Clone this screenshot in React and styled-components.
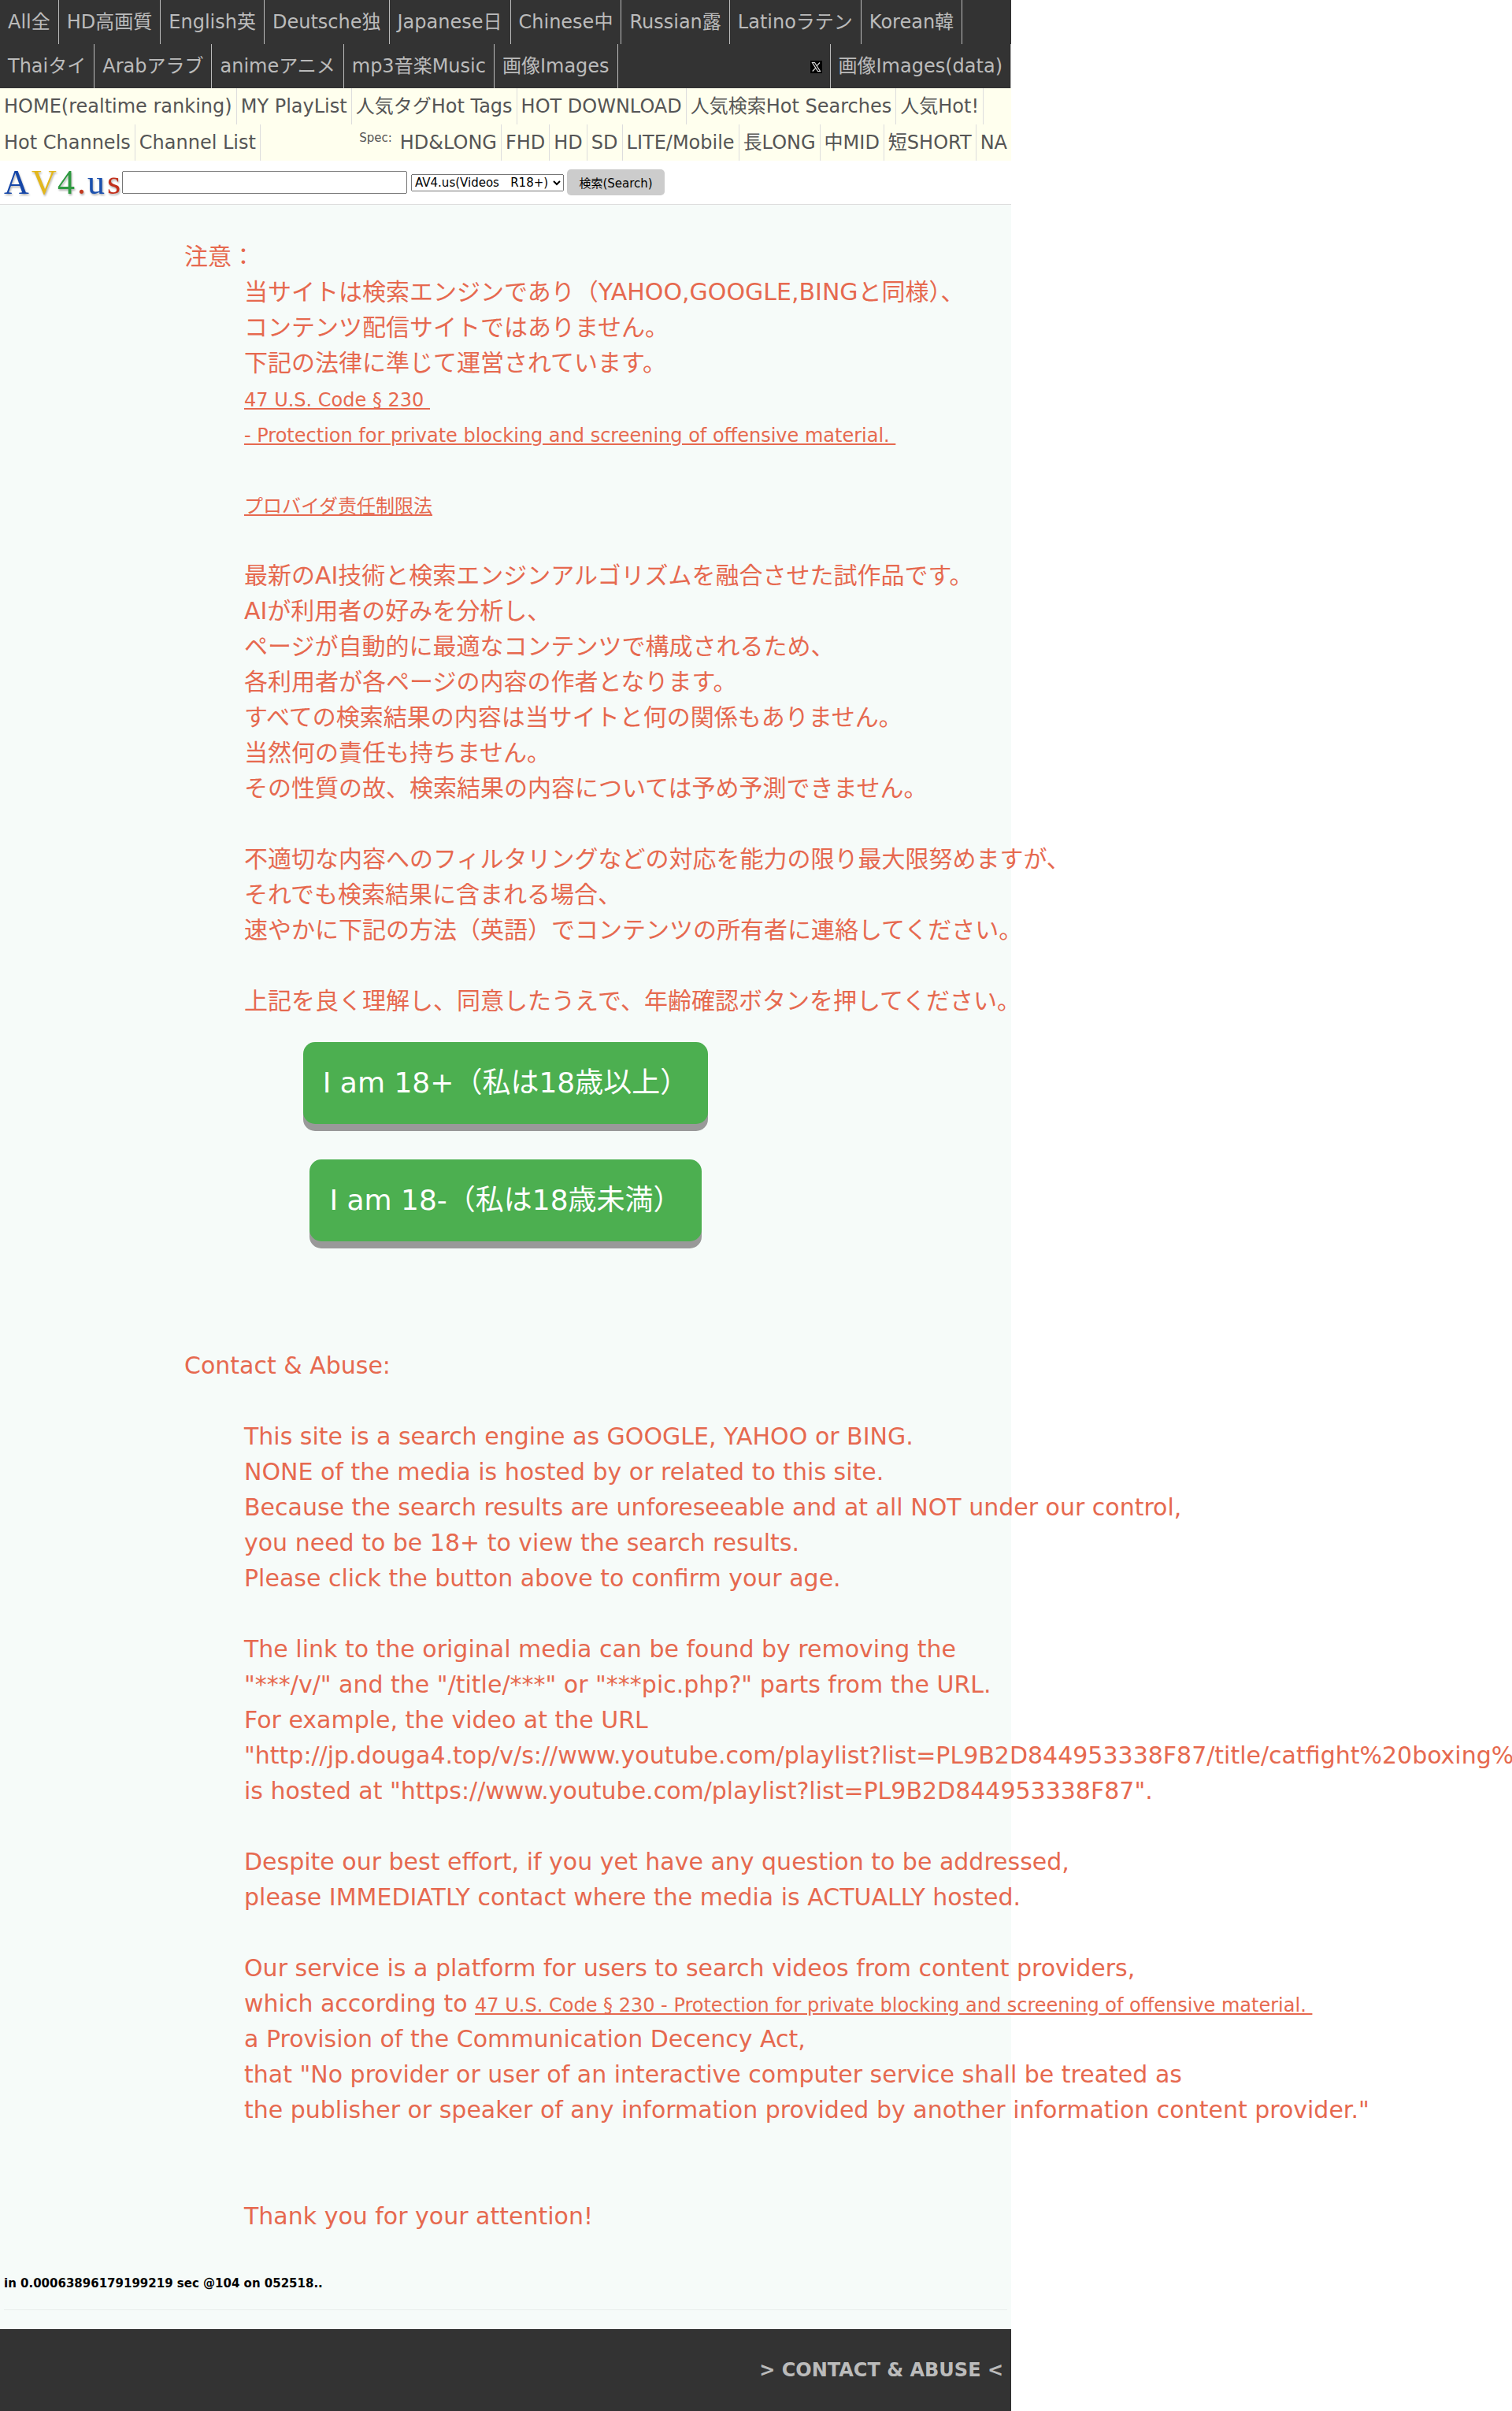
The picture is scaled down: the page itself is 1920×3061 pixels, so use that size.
import React, { useState } from 'react';
import styled, { createGlobalStyle } from 'styled-components';

const languages = [
  "All全", "HD高画質", "English英", "Deutsche独", "Japanese日",
  "Chinese中", "Russian露", "Latinoラテン", "Korean韓"
];
const categories = ["Thaiタイ", "Arabアラブ", "animeアニメ", "mp3音楽Music", "画像Images"];
const rankings = [
  "HOME(realtime ranking)", "MY PlayList", "人気タグHot Tags",
  "HOT DOWNLOAD", "人気検索Hot Searches", "人気Hot!"
];
const channels = ["Hot Channels", "Channel List"];
const specs = ["HD&LONG", "FHD", "HD", "SD", "LITE/Mobile", "長LONG", "中MID", "短SHORT", "NA"];

const logoLetters = [
  { char: "A", x: 5, color: "#1546a8" },
  { char: "V", x: 40, color: "#e3b71c" },
  { char: "4", x: 73, color: "#2f9a41" },
  { char: ".", x: 98, color: "#c23a20" },
  { char: "u", x: 111, color: "#1b50ae" },
  { char: "s", x: 136, color: "#c2301c" }
];

export default function App() {

  const [keyword, setKeyword] = useState("");

  return (
    <Page>
      <GlobalStyle />
      <NavRow>
        {languages.map((name) => <NavItem key={name}>{name}</NavItem>)}
      </NavRow>
      <NavRow>
        {categories.map((name) => <NavItem key={name}>{name}</NavItem>)}
        <NavRight>
          <NavItem>
            <XMark viewBox="0 0 15 16">
              <path d="M2.5 2.5h3l7 11h-3z M12 2.5l-4.2 4.6 M7 9.2l-4.3 4.3" />
            </XMark>
          </NavItem>
          <NavItem>画像Images(data)</NavItem>
        </NavRight>
      </NavRow>
      <SubRow>
        {rankings.map((name) => <SubItem key={name}>{name}</SubItem>)}
      </SubRow>
      <SubRow>
        {channels.map((name) => <SubItem key={name}>{name}</SubItem>)}
        <NavRight>
          <SpecLabel>Spec:</SpecLabel>
          {specs.map((name) => <SubItem key={name} $last={name === "NA"}>{name}</SubItem>)}
        </NavRight>
      </SubRow>

      <SearchBar>
        <Logo width="155" height="52" viewBox="0 0 155 52">
          {logoLetters.map(({ char, x, color }) => (
            <text key={char} x={x} y="40" fill={color}>{char}</text>
          ))}
        </Logo>
        <SearchInput type="text" name="keyword" value={keyword} onChange={(e) => setKeyword(e.target.value)} />
        <SearchSelect>
          <option>AV4.us(Videos&nbsp;&nbsp; R18+)</option>
        </SearchSelect>
        <SearchButton type="submit">検索(Search)</SearchButton>
      </SearchBar>

      <Content>
        <Notice>
          <dt>注意：</dt>
          <dd>
            当サイトは検索エンジンであり（YAHOO,GOOGLE,BINGと同様）、<br />
            コンテンツ配信サイトではありません。<br />
            下記の法律に準じて運営されています。<br />
            <LawLink>47 U.S. Code § 230&nbsp;</LawLink><br />
            <LawLink>- Protection for private blocking and screening of offensive material.&nbsp;</LawLink><br />
            <br />
            <LawLink>プロバイダ责任制限法</LawLink><br />
            <br />
            最新のAI技術と検索エンジンアルゴリズムを融合させた試作品です。<br />
            AIが利用者の好みを分析し、<br />
            ページが自動的に最適なコンテンツで構成されるため、<br />
            各利用者が各ページの内容の作者となります。<br />
            すべての検索結果の内容は当サイトと何の関係もありません。<br />
            当然何の責任も持ちません。<br />
            その性質の故、検索結果の内容については予め予測できません。<br />
            <br />
            不適切な内容へのフィルタリングなどの対応を能力の限り最大限努めますが、<br />
            それでも検索結果に含まれる場合、<br />
            速やかに下記の方法（英語）でコンテンツの所有者に連絡してください。<br />
            <br />
            上記を良く理解し、同意したうえで、年齢確認ボタンを押してください。
          </dd>
        </Notice>

        <AgeButtons>
          <AgeButton>I am 18+（私は18歳以上）</AgeButton>
          <AgeButton>I am 18-（私は18歳未満）</AgeButton>
        </AgeButtons>

        <Notice>
          <dt>Contact &amp; Abuse:</dt>
          <dd>
            <br />
            This site is a search engine as GOOGLE, YAHOO or BING.<br />
            NONE of the media is hosted by or related to this site.<br />
            Because the search results are unforeseeable and at all NOT under our control,<br />
            you need to be 18+ to view the search results.<br />
            Please click the button above to confirm your age.<br />
            <br />
            The link to the original media can be found by removing the<br />
            "***/v/" and the "/title/***" or "***pic.php?" parts from the URL.<br />
            For example, the video at the URL<br />
            "http://jp.douga4.top/v/s://www.youtube.com/playlist?list=PL9B2D844953338F87/title/catfight%20boxing%<br />
            is hosted at "https://www.youtube.com/playlist?list=PL9B2D844953338F87".<br />
            <br />
            Despite our best effort, if you yet have any question to be addressed,<br />
            please IMMEDIATLY contact where the media is ACTUALLY hosted.<br />
            <br />
            Our service is a platform for users to search videos from content providers,<br />
            which according to <LawLink>47 U.S. Code § 230 - Protection for private blocking and screening of offensive material.&nbsp;</LawLink><br />
            a Provision of the Communication Decency Act,<br />
            that "No provider or user of an interactive computer service shall be treated as<br />
            the publisher or speaker of any information provided by another information content provider."<br />
            <br />
            <br />
            Thank you for your attention!
          </dd>
        </Notice>

        <Timing>in 0.00063896179199219 sec @104 on 052518..</Timing>
        <Divider />
      </Content>

      <Footer>&gt; CONTACT &amp; ABUSE &lt;</Footer>
    </Page>
  );
};

const GlobalStyle = createGlobalStyle`
  * {
    box-sizing: border-box;
  }
  body {
    margin: 0;
    background: #fff;
    overflow-x: hidden;
    font-family: "DejaVu Sans", "Noto Sans CJK JP", sans-serif;
    font-size: 24px;
    line-height: 1.5;
  }
`;

const Page = styled.div`
  width: 1284px;
`;

const NavRow = styled.div`
  display: flex;
  height: 56px;
  background: #333;
  color: #bbb;
`;

const NavItem = styled.div`
  padding: 10px;
  border-right: 1px solid #bbb;
  white-space: nowrap;
`;

const NavRight = styled.div`
  display: flex;
  margin-left: auto;
`;

const XMark = styled.svg`
  display: block;
  width: 15px;
  height: 16px;
  margin-top: 11px;
  background: #000;
  fill: none;
  stroke: #ddd;
  stroke-width: 1.2;
`;

const SubRow = styled.div`
  display: flex;
  height: 46px;
  background: #ffffee;
  color: #555;
`;

const SubItem = styled.div`
  padding: 5px;
  border-right: ${(props) => props.$last ? "none" : "1px solid #ddd"};
  white-space: nowrap;
`;

const SpecLabel = styled.div`
  padding: 0 5px;
  font-size: 15px;
  line-height: 34px;
`;

const SearchBar = styled.div`
  display: flex;
  align-items: center;
  height: 56px;
  border-bottom: 1px solid #ddd;
`;

const Logo = styled.svg`
  font-family: "Liberation Serif", serif;
  font-size: 44px;
  filter: drop-shadow(1px 2px 1px rgba(0, 0, 0, 0.3));
`;

const SearchInput = styled.input`
  width: 362px;
  height: 29px;
  margin-right: 5px;
`;

const SearchSelect = styled.select`
  width: 194px;
  height: 22px;
  margin-right: 4px;
  padding: 0;
  font-family: inherit;
  font-size: 15px;
`;

const SearchButton = styled.button`
  width: 124px;
  height: 33px;
  padding: 0;
  border: none;
  border-radius: 5px;
  background: #ccc;
  color: #000;
  font-family: inherit;
  font-size: 15px;
`;

const Content = styled.div`
  height: 2697px;
  padding: 43px 5px 0;
  background: #f6fbf9;
`;

const Notice = styled.dl`
  margin: 0;
  padding-left: 229px;
  color: #e6694f;
  font-size: 30px;
  white-space: nowrap;

  dd {
    margin: 0 0 0 76px;
  }
`;

const LawLink = styled.a`
  font-size: 24px;
  text-decoration: underline;
`;

const AgeButtons = styled.div`
  display: flex;
  flex-direction: column;
  align-items: center;
  gap: 45px;
  margin: 30px 0 135px;
`;

const AgeButton = styled.button`
  height: 104px;
  padding: 0 25px;
  border: none;
  border-radius: 15px;
  background: #4caf50;
  box-shadow: 0 9px #999;
  color: #fff;
  font-family: inherit;
  font-size: 36px;
  line-height: 54px;
`;

const Timing = styled.div`
  margin-top: 52px;
  font-size: 15px;
  font-weight: bold;
`;

const Divider = styled.div`
  margin-top: 21px;
  border-top: 1px solid #e9eeec;
`;

const Footer = styled.div`
  height: 104px;
  padding: 34px 10px 0;
  background: #333;
  color: #bbb;
  font-weight: bold;
  text-align: right;
`;
